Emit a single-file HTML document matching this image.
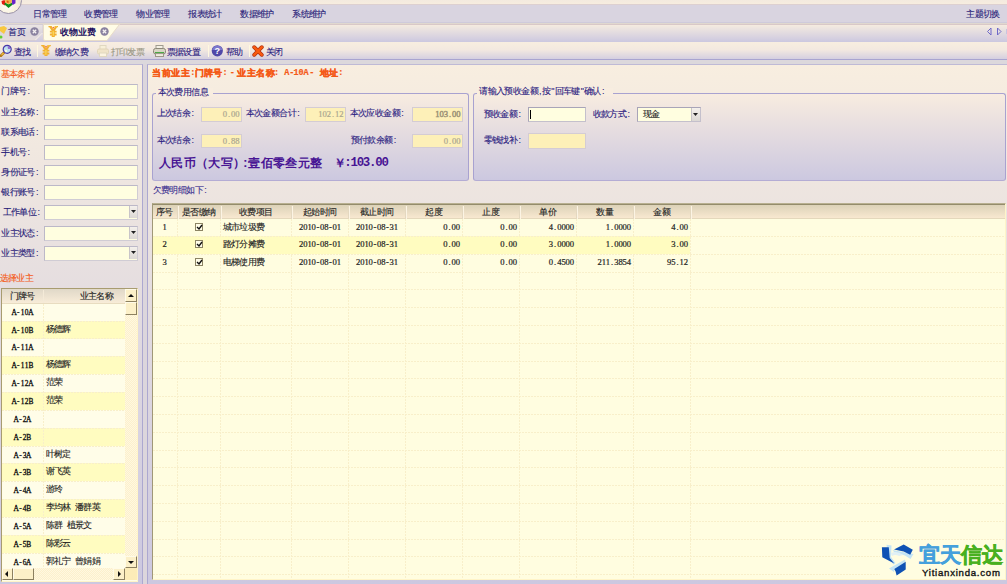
<!DOCTYPE html>
<html><head><meta charset="utf-8">
<style>
*{margin:0;padding:0;box-sizing:border-box}
html,body{width:1007px;height:584px;overflow:hidden;background:#dcd6dc;font-family:"Liberation Sans",sans-serif}
.a{position:absolute}
.t{position:absolute;white-space:nowrap;font-size:9px;line-height:10px;color:#2a2080;-webkit-text-stroke-width:0.12px}
.t i{display:inline-flex;justify-content:center;font-style:normal}
.b{-webkit-text-stroke-width:0}
.n{position:absolute;white-space:nowrap;font-family:"Liberation Serif",serif;font-size:8.6px;line-height:9px;color:#222;-webkit-text-stroke:0.2px currentColor}
.n i{display:inline-flex;justify-content:center;width:4.2px;font-style:normal}
</style></head><body>

<div class="a" style="left:0px;top:0px;width:1007px;height:4px;background:linear-gradient(#f3eadf,#f7eddf)"></div>
<div class="a" style="left:0px;top:4px;width:1007px;height:1px;background:#ddd0d0"></div>
<div class="a" style="left:0px;top:5px;width:1007px;height:17px;background:#d9d4e0"></div>
<div class="a" style="left:0px;top:22px;width:1007px;height:1px;background:#cfcadb"></div>
<div class="a" style="left:0px;top:23px;width:1007px;height:1px;background:#e0d8cf"></div>
<div class="a" style="left:0px;top:24px;width:1007px;height:1px;background:#d9c8c8"></div>
<div class="a" style="left:0px;top:25px;width:1007px;height:17px;background:linear-gradient(#f5ebe0,#ccc8e0)"></div>
<div class="a" style="left:0px;top:42px;width:1007px;height:17px;background:linear-gradient(#f8eee0 0,#f3e9e0 45%,#d4cfe0 100%)"></div>
<div class="a" style="left:0px;top:59px;width:1007px;height:1px;background:#a8a4d0"></div>
<div class="a" style="left:0px;top:60px;width:1007px;height:4px;background:#dcd8dc"></div>
<div class="a" style="left:0px;top:64px;width:143px;height:520px;background:linear-gradient(#f8eee0,#ccc8e0);border-right:1px solid #aca8d0;border-top:1px solid #bfbad6"></div>
<div class="a" style="left:147px;top:64px;width:870px;height:520px;background:linear-gradient(#f8eee0,#ccc8e0);border-left:1px solid #aca8d0;border-top:1px solid #bfbad6"></div>
<div class="a" style="left:152px;top:203px;width:854px;height:377px;background:#fffde0;border-top:1px solid #b8b090;border-left:1px solid #a09878;border-right:1px solid #fff4c8;border-bottom:1px solid #fff4c8"></div>
<div class="a" style="left:153px;top:204px;width:852px;height:1px;background:#948c6c"></div>
<div class="a" style="left:153px;top:205px;width:852px;height:14px;background:linear-gradient(#dcd2b8,#f8e8d0);border-bottom:1px solid #e4d8bc"></div>
<div class="a" style="left:177px;top:206px;width:1px;height:13px;background:#e4d8c0"></div>
<div class="a" style="left:178px;top:206px;width:1px;height:13px;background:#fcf4e4"></div>
<div class="a" style="left:177px;top:219px;width:1px;height:360px;background:repeating-linear-gradient(#f8efca 0 2px,transparent 2px 3px)"></div>
<div class="a" style="left:220px;top:206px;width:1px;height:13px;background:#e4d8c0"></div>
<div class="a" style="left:221px;top:206px;width:1px;height:13px;background:#fcf4e4"></div>
<div class="a" style="left:220px;top:219px;width:1px;height:360px;background:repeating-linear-gradient(#f8efca 0 2px,transparent 2px 3px)"></div>
<div class="a" style="left:291px;top:206px;width:1px;height:13px;background:#e4d8c0"></div>
<div class="a" style="left:292px;top:206px;width:1px;height:13px;background:#fcf4e4"></div>
<div class="a" style="left:291px;top:219px;width:1px;height:360px;background:repeating-linear-gradient(#f8efca 0 2px,transparent 2px 3px)"></div>
<div class="a" style="left:348px;top:206px;width:1px;height:13px;background:#e4d8c0"></div>
<div class="a" style="left:349px;top:206px;width:1px;height:13px;background:#fcf4e4"></div>
<div class="a" style="left:348px;top:219px;width:1px;height:360px;background:repeating-linear-gradient(#f8efca 0 2px,transparent 2px 3px)"></div>
<div class="a" style="left:405px;top:206px;width:1px;height:13px;background:#e4d8c0"></div>
<div class="a" style="left:406px;top:206px;width:1px;height:13px;background:#fcf4e4"></div>
<div class="a" style="left:405px;top:219px;width:1px;height:360px;background:repeating-linear-gradient(#f8efca 0 2px,transparent 2px 3px)"></div>
<div class="a" style="left:462px;top:206px;width:1px;height:13px;background:#e4d8c0"></div>
<div class="a" style="left:463px;top:206px;width:1px;height:13px;background:#fcf4e4"></div>
<div class="a" style="left:462px;top:219px;width:1px;height:360px;background:repeating-linear-gradient(#f8efca 0 2px,transparent 2px 3px)"></div>
<div class="a" style="left:519px;top:206px;width:1px;height:13px;background:#e4d8c0"></div>
<div class="a" style="left:520px;top:206px;width:1px;height:13px;background:#fcf4e4"></div>
<div class="a" style="left:519px;top:219px;width:1px;height:360px;background:repeating-linear-gradient(#f8efca 0 2px,transparent 2px 3px)"></div>
<div class="a" style="left:576px;top:206px;width:1px;height:13px;background:#e4d8c0"></div>
<div class="a" style="left:577px;top:206px;width:1px;height:13px;background:#fcf4e4"></div>
<div class="a" style="left:576px;top:219px;width:1px;height:360px;background:repeating-linear-gradient(#f8efca 0 2px,transparent 2px 3px)"></div>
<div class="a" style="left:633px;top:206px;width:1px;height:13px;background:#e4d8c0"></div>
<div class="a" style="left:634px;top:206px;width:1px;height:13px;background:#fcf4e4"></div>
<div class="a" style="left:633px;top:219px;width:1px;height:360px;background:repeating-linear-gradient(#f8efca 0 2px,transparent 2px 3px)"></div>
<div class="a" style="left:690px;top:206px;width:1px;height:13px;background:#e4d8c0"></div>
<div class="a" style="left:691px;top:206px;width:1px;height:13px;background:#fcf4e4"></div>
<div class="a" style="left:690px;top:219px;width:1px;height:360px;background:repeating-linear-gradient(#f8efca 0 2px,transparent 2px 3px)"></div>
<div class="t" style="left:104.75px;top:207px;width:120px;text-align:center;color:#222"><i style="width:8.4px">序</i><i style="width:8.4px">号</i></div>
<div class="t" style="left:139.0px;top:207px;width:120px;text-align:center;color:#222"><i style="width:8.4px">是</i><i style="width:8.4px">否</i><i style="width:8.4px">缴</i><i style="width:8.4px">纳</i></div>
<div class="t" style="left:196.0px;top:207px;width:120px;text-align:center;color:#222"><i style="width:8.4px">收</i><i style="width:8.4px">费</i><i style="width:8.4px">项</i><i style="width:8.4px">目</i></div>
<div class="t" style="left:260.0px;top:207px;width:120px;text-align:center;color:#222"><i style="width:8.4px">起</i><i style="width:8.4px">始</i><i style="width:8.4px">时</i><i style="width:8.4px">间</i></div>
<div class="t" style="left:317.0px;top:207px;width:120px;text-align:center;color:#222"><i style="width:8.4px">截</i><i style="width:8.4px">止</i><i style="width:8.4px">时</i><i style="width:8.4px">间</i></div>
<div class="t" style="left:374.0px;top:207px;width:120px;text-align:center;color:#222"><i style="width:8.4px">起</i><i style="width:8.4px">度</i></div>
<div class="t" style="left:431.0px;top:207px;width:120px;text-align:center;color:#222"><i style="width:8.4px">止</i><i style="width:8.4px">度</i></div>
<div class="t" style="left:488.0px;top:207px;width:120px;text-align:center;color:#222"><i style="width:8.4px">单</i><i style="width:8.4px">价</i></div>
<div class="t" style="left:545.0px;top:207px;width:120px;text-align:center;color:#222"><i style="width:8.4px">数</i><i style="width:8.4px">量</i></div>
<div class="t" style="left:602.0px;top:207px;width:120px;text-align:center;color:#222"><i style="width:8.4px">金</i><i style="width:8.4px">额</i></div>
<div class="a" style="left:153px;top:236px;width:537px;height:18px;background:#fffcc0"></div>
<div class="a" style="left:153px;top:236px;width:852px;height:1px;background:repeating-linear-gradient(90deg,#f8efca 0 2px,transparent 2px 3px)"></div>
<div class="a" style="left:153px;top:254px;width:852px;height:1px;background:repeating-linear-gradient(90deg,#f8efca 0 2px,transparent 2px 3px)"></div>
<div class="a" style="left:153px;top:272px;width:852px;height:1px;background:repeating-linear-gradient(90deg,#f8efca 0 2px,transparent 2px 3px)"></div>
<div class="a" style="left:153px;top:289px;width:852px;height:1px;background:repeating-linear-gradient(90deg,#f8efca 0 2px,transparent 2px 3px)"></div>
<div class="a" style="left:153px;top:307px;width:852px;height:1px;background:repeating-linear-gradient(90deg,#f8efca 0 2px,transparent 2px 3px)"></div>
<div class="a" style="left:153px;top:325px;width:852px;height:1px;background:repeating-linear-gradient(90deg,#f8efca 0 2px,transparent 2px 3px)"></div>
<div class="a" style="left:153px;top:343px;width:852px;height:1px;background:repeating-linear-gradient(90deg,#f8efca 0 2px,transparent 2px 3px)"></div>
<div class="a" style="left:153px;top:361px;width:852px;height:1px;background:repeating-linear-gradient(90deg,#f8efca 0 2px,transparent 2px 3px)"></div>
<div class="a" style="left:153px;top:378px;width:852px;height:1px;background:repeating-linear-gradient(90deg,#f8efca 0 2px,transparent 2px 3px)"></div>
<div class="a" style="left:153px;top:396px;width:852px;height:1px;background:repeating-linear-gradient(90deg,#f8efca 0 2px,transparent 2px 3px)"></div>
<div class="a" style="left:153px;top:414px;width:852px;height:1px;background:repeating-linear-gradient(90deg,#f8efca 0 2px,transparent 2px 3px)"></div>
<div class="a" style="left:153px;top:432px;width:852px;height:1px;background:repeating-linear-gradient(90deg,#f8efca 0 2px,transparent 2px 3px)"></div>
<div class="a" style="left:153px;top:450px;width:852px;height:1px;background:repeating-linear-gradient(90deg,#f8efca 0 2px,transparent 2px 3px)"></div>
<div class="a" style="left:153px;top:467px;width:852px;height:1px;background:repeating-linear-gradient(90deg,#f8efca 0 2px,transparent 2px 3px)"></div>
<div class="a" style="left:153px;top:485px;width:852px;height:1px;background:repeating-linear-gradient(90deg,#f8efca 0 2px,transparent 2px 3px)"></div>
<div class="a" style="left:153px;top:503px;width:852px;height:1px;background:repeating-linear-gradient(90deg,#f8efca 0 2px,transparent 2px 3px)"></div>
<div class="a" style="left:153px;top:521px;width:852px;height:1px;background:repeating-linear-gradient(90deg,#f8efca 0 2px,transparent 2px 3px)"></div>
<div class="a" style="left:153px;top:539px;width:852px;height:1px;background:repeating-linear-gradient(90deg,#f8efca 0 2px,transparent 2px 3px)"></div>
<div class="a" style="left:153px;top:556px;width:852px;height:1px;background:repeating-linear-gradient(90deg,#f8efca 0 2px,transparent 2px 3px)"></div>
<div class="a" style="left:153px;top:574px;width:852px;height:1px;background:repeating-linear-gradient(90deg,#f8efca 0 2px,transparent 2px 3px)"></div>
<div class="n" style="left:104.75px;top:223px;width:120px;text-align:center;"><i>1</i></div>
<div class="a" style="left:195px;top:223px;width:8px;height:8px;border:1px solid #8c8464;background:#fffde8"></div>
<svg class="a" style="left:196px;top:224px" width="7" height="7" viewBox="0 0 7 7"><path d="M1 3 L3 5 L6 1" stroke="#111" stroke-width="1.4" fill="none"/></svg>
<div class="t" style="left:223px;top:222px;color:#222"><i style="width:8.4px">城</i><i style="width:8.4px">市</i><i style="width:8.4px">垃</i><i style="width:8.4px">圾</i><i style="width:8.4px">费</i></div>
<div class="n" style="left:260.0px;top:223px;width:120px;text-align:center;"><i>2</i><i>0</i><i>1</i><i>0</i><i>-</i><i>0</i><i>8</i><i>-</i><i>0</i><i>1</i></div>
<div class="n" style="left:317.0px;top:223px;width:120px;text-align:center;"><i>2</i><i>0</i><i>1</i><i>0</i><i>-</i><i>0</i><i>8</i><i>-</i><i>3</i><i>1</i></div>
<div class="n" style="left:340.0px;top:223px;width:120px;text-align:right;"><i>0</i><i>.</i><i>0</i><i>0</i></div>
<div class="n" style="left:397.0px;top:223px;width:120px;text-align:right;"><i>0</i><i>.</i><i>0</i><i>0</i></div>
<div class="n" style="left:454.0px;top:223px;width:120px;text-align:right;"><i>4</i><i>.</i><i>0</i><i>0</i><i>0</i><i>0</i></div>
<div class="n" style="left:511.0px;top:223px;width:120px;text-align:right;"><i>1</i><i>.</i><i>0</i><i>0</i><i>0</i><i>0</i></div>
<div class="n" style="left:568.0px;top:223px;width:120px;text-align:right;"><i>4</i><i>.</i><i>0</i><i>0</i></div>
<div class="n" style="left:104.75px;top:240px;width:120px;text-align:center;"><i>2</i></div>
<div class="a" style="left:195px;top:240px;width:8px;height:8px;border:1px solid #8c8464;background:#fffde8"></div>
<svg class="a" style="left:196px;top:241px" width="7" height="7" viewBox="0 0 7 7"><path d="M1 3 L3 5 L6 1" stroke="#111" stroke-width="1.4" fill="none"/></svg>
<div class="t" style="left:223px;top:239px;color:#222"><i style="width:8.4px">路</i><i style="width:8.4px">灯</i><i style="width:8.4px">分</i><i style="width:8.4px">摊</i><i style="width:8.4px">费</i></div>
<div class="n" style="left:260.0px;top:240px;width:120px;text-align:center;"><i>2</i><i>0</i><i>1</i><i>0</i><i>-</i><i>0</i><i>8</i><i>-</i><i>0</i><i>1</i></div>
<div class="n" style="left:317.0px;top:240px;width:120px;text-align:center;"><i>2</i><i>0</i><i>1</i><i>0</i><i>-</i><i>0</i><i>8</i><i>-</i><i>3</i><i>1</i></div>
<div class="n" style="left:340.0px;top:240px;width:120px;text-align:right;"><i>0</i><i>.</i><i>0</i><i>0</i></div>
<div class="n" style="left:397.0px;top:240px;width:120px;text-align:right;"><i>0</i><i>.</i><i>0</i><i>0</i></div>
<div class="n" style="left:454.0px;top:240px;width:120px;text-align:right;"><i>3</i><i>.</i><i>0</i><i>0</i><i>0</i><i>0</i></div>
<div class="n" style="left:511.0px;top:240px;width:120px;text-align:right;"><i>1</i><i>.</i><i>0</i><i>0</i><i>0</i><i>0</i></div>
<div class="n" style="left:568.0px;top:240px;width:120px;text-align:right;"><i>3</i><i>.</i><i>0</i><i>0</i></div>
<div class="n" style="left:104.75px;top:258px;width:120px;text-align:center;"><i>3</i></div>
<div class="a" style="left:195px;top:258px;width:8px;height:8px;border:1px solid #8c8464;background:#fffde8"></div>
<svg class="a" style="left:196px;top:259px" width="7" height="7" viewBox="0 0 7 7"><path d="M1 3 L3 5 L6 1" stroke="#111" stroke-width="1.4" fill="none"/></svg>
<div class="t" style="left:223px;top:257px;color:#222"><i style="width:8.4px">电</i><i style="width:8.4px">梯</i><i style="width:8.4px">使</i><i style="width:8.4px">用</i><i style="width:8.4px">费</i></div>
<div class="n" style="left:260.0px;top:258px;width:120px;text-align:center;"><i>2</i><i>0</i><i>1</i><i>0</i><i>-</i><i>0</i><i>8</i><i>-</i><i>0</i><i>1</i></div>
<div class="n" style="left:317.0px;top:258px;width:120px;text-align:center;"><i>2</i><i>0</i><i>1</i><i>0</i><i>-</i><i>0</i><i>8</i><i>-</i><i>3</i><i>1</i></div>
<div class="n" style="left:340.0px;top:258px;width:120px;text-align:right;"><i>0</i><i>.</i><i>0</i><i>0</i></div>
<div class="n" style="left:397.0px;top:258px;width:120px;text-align:right;"><i>0</i><i>.</i><i>0</i><i>0</i></div>
<div class="n" style="left:454.0px;top:258px;width:120px;text-align:right;"><i>0</i><i>.</i><i>4</i><i>5</i><i>0</i><i>0</i></div>
<div class="n" style="left:511.0px;top:258px;width:120px;text-align:right;"><i>2</i><i>1</i><i>1</i><i>.</i><i>3</i><i>8</i><i>5</i><i>4</i></div>
<div class="n" style="left:568.0px;top:258px;width:120px;text-align:right;"><i>9</i><i>5</i><i>.</i><i>1</i><i>2</i></div>
<div class="a" style="left:-5.5px;top:-13.5px;width:27.5px;height:27.5px;border-radius:50%;background:radial-gradient(circle at 45% 70%,#fffef4 0,#f8f0dc 45%,#e0d8d0 75%,#b8b0bc 100%);border:1px solid #9a92a8"></div>
<svg class="a" style="left:0;top:0" width="17" height="9" viewBox="0 0 17 9"><path d="M1.5 1 L4.5 0 L6 3.5 L5 5.5 L2 4Z" fill="#e41c10"/><path d="M4 4 L8.5 8 L12.8 4.5 L11.5 2.8 L8.5 4.2 L5.5 2.8Z" fill="#10901c"/><path d="M12 0 L15.5 0 L15.5 3.2 L12.8 5 L11.6 2.8Z" fill="#6a24c8"/><path d="M5 0 L12 0 L11.6 2.8 L8.5 4.2 L5.5 2.8Z" fill="#f2b448"/><path d="M6.5 1 L8 0.5 L9 2.2 L7.5 3Z" fill="#e85a10"/></svg>
<div class="t" style="left:33.5px;top:8.5px;color:#281c78"><i style="width:8.4px">日</i><i style="width:8.4px">常</i><i style="width:8.4px">管</i><i style="width:8.4px">理</i></div>
<div class="t" style="left:84.5px;top:8.5px;color:#281c78"><i style="width:8.4px">收</i><i style="width:8.4px">费</i><i style="width:8.4px">管</i><i style="width:8.4px">理</i></div>
<div class="t" style="left:136.5px;top:8.5px;color:#281c78"><i style="width:8.4px">物</i><i style="width:8.4px">业</i><i style="width:8.4px">管</i><i style="width:8.4px">理</i></div>
<div class="t" style="left:188.5px;top:8.5px;color:#281c78"><i style="width:8.4px">报</i><i style="width:8.4px">表</i><i style="width:8.4px">统</i><i style="width:8.4px">计</i></div>
<div class="t" style="left:240.5px;top:8.5px;color:#281c78"><i style="width:8.4px">数</i><i style="width:8.4px">据</i><i style="width:8.4px">维</i><i style="width:8.4px">护</i></div>
<div class="t" style="left:292.5px;top:8.5px;color:#281c78"><i style="width:8.4px">系</i><i style="width:8.4px">统</i><i style="width:8.4px">维</i><i style="width:8.4px">护</i></div>
<div class="t" style="left:966.5px;top:8.5px;color:#281c78"><i style="width:8.4px">主</i><i style="width:8.4px">题</i><i style="width:8.4px">切</i><i style="width:8.4px">换</i></div>
<svg class="a" style="left:0;top:24px" width="125" height="18" viewBox="0 0 125 18"><defs><linearGradient id="tg1" x1="0" y1="0" x2="0" y2="1"><stop offset="0" stop-color="#ece6e4"/><stop offset="0.5" stop-color="#dcd6de"/><stop offset="1" stop-color="#e4dcdc"/></linearGradient></defs><path d="M-1 0.5 L43 0.5 L43 9 L35.5 16.5 L-1 16.5Z" fill="url(#tg1)" stroke="#d4ccd4" stroke-width="1"/><path d="M35.5 16 L42.5 9" stroke="#fbf4ec" stroke-width="1" fill="none"/><path d="M43.5 0.5 L119.5 0.5 L107 16.5 L45 16.5 Q43.5 16.5 43.5 15Z" fill="#fffce6" stroke="#e8dcc8" stroke-width="1"/></svg>
<svg class="a" style="left:0;top:25px" width="8" height="14" viewBox="0 0 8 14"><path d="M0 2 L4 1 L7 3 L4 9 L0 6Z" fill="#f8c840"/><circle cx="1" cy="12" r="1.5" fill="#60d030"/></svg>
<div class="t" style="left:8.5px;top:27px;color:#281c78"><i style="width:8.4px">首</i><i style="width:8.4px">页</i></div>
<svg class="a" style="left:30.4px;top:27px" width="9" height="9" viewBox="0 0 9 9"><circle cx="4.5" cy="4.5" r="4.2" fill="#8a82a0"/><path d="M2.8 2.8 L6.2 6.2 M6.2 2.8 L2.8 6.2" stroke="#f4f0f0" stroke-width="1.3"/></svg>
<svg class="a" style="left:100.2px;top:27px" width="9" height="9" viewBox="0 0 9 9"><circle cx="4.5" cy="4.5" r="4.2" fill="#8a82a0"/><path d="M2.8 2.8 L6.2 6.2 M6.2 2.8 L2.8 6.2" stroke="#f4f0f0" stroke-width="1.3"/></svg>
<svg class="a" style="left:47.5px;top:26px" width="10.5" height="11.5" viewBox="0 0 10 12"><path d="M0 0 L3.6 0 L3.6 1.2 L5 3.2 L6.4 1.2 L6.4 0 L10 0 L10 1.4 L9 1.4 L6.6 5 L8.5 5 L8.5 6.8 L6.6 6.8 L6.6 7.8 L8.5 7.8 L8.5 9.8 L6.6 9.8 L6.6 11.6 L3.4 11.6 L3.4 9.8 L1.5 9.8 L1.5 7.8 L3.4 7.8 L3.4 6.8 L1.5 6.8 L1.5 5 L3.4 5 L1 1.4 L0 1.4Z" fill="#f2b030"/><path d="M4.3 5.5 L5.6 5.5 L5.3 10.5 L4.6 10.5Z" fill="#fce868"/><path d="M7 0.5 L9 0.5 L8 1.5Z" fill="#fce060"/><circle cx="5" cy="1.6" r="0.9" fill="#f07040"/></svg>
<div class="t b" style="left:60px;top:27px;color:#1c1060;font-weight:bold"><i style="width:9.1px">收</i><i style="width:9.1px">物</i><i style="width:9.1px">业</i><i style="width:9.1px">费</i></div>
<svg class="a" style="left:986px;top:27px" width="21" height="9" viewBox="0 0 21 9"><path d="M5 1 L1.5 4.5 L5 8Z" fill="none" stroke="#6e68c8" stroke-width="1"/><path d="M11.5 1 L15 4.5 L11.5 8Z" fill="none" stroke="#6e68c8" stroke-width="1"/><path d="M20.5 2 L20.5 7" stroke="#c8c4e0" stroke-width="1"/></svg>
<svg class="a" style="left:0;top:44px" width="13" height="13" viewBox="0 0 13 13"><path d="M0.8 11.8 L4 8.6" stroke="#b07818" stroke-width="2.6" stroke-linecap="round"/><path d="M1.5 11 L3.6 9" stroke="#f0c040" stroke-width="1.2"/><circle cx="7.2" cy="5.3" r="4" fill="#c0e0f0" stroke="#4838a8" stroke-width="1.2"/><path d="M7.5 2 A3 3 0 0 1 10.4 5 L8 5Z" fill="#9070d0"/><circle cx="6" cy="7" r="1.2" fill="#f4fce8"/></svg>
<div class="t" style="left:14px;top:46.5px;"><i style="width:8.4px">查</i><i style="width:8.4px">找</i></div>
<div class="a" style="left:37px;top:45px;width:1px;height:12px;background:#fff8e0"></div>
<svg class="a" style="left:41px;top:45px" width="10" height="11.5" viewBox="0 0 10 12"><path d="M0 0 L3.6 0 L3.6 1.2 L5 3.2 L6.4 1.2 L6.4 0 L10 0 L10 1.4 L9 1.4 L6.6 5 L8.5 5 L8.5 6.8 L6.6 6.8 L6.6 7.8 L8.5 7.8 L8.5 9.8 L6.6 9.8 L6.6 11.6 L3.4 11.6 L3.4 9.8 L1.5 9.8 L1.5 7.8 L3.4 7.8 L3.4 6.8 L1.5 6.8 L1.5 5 L3.4 5 L1 1.4 L0 1.4Z" fill="#f2b030"/><path d="M4.3 5.5 L5.6 5.5 L5.3 10.5 L4.6 10.5Z" fill="#fce868"/><path d="M7 0.5 L9 0.5 L8 1.5Z" fill="#fce060"/><circle cx="5" cy="1.6" r="0.9" fill="#f07040"/></svg>
<div class="t" style="left:55px;top:46.5px;"><i style="width:8.4px">缴</i><i style="width:8.4px">纳</i><i style="width:8.4px">欠</i><i style="width:8.4px">费</i></div>
<svg class="a" style="left:97px;top:45px" width="12" height="12" viewBox="0 0 12 12"><rect x="3" y="0.5" width="6" height="4" fill="#f8f0d8" stroke="#e0d8c0"/><rect x="0.5" y="4" width="11" height="5" rx="1.5" fill="#f0e4c8" stroke="#e0d4b8"/><rect x="2.5" y="8" width="7" height="3.5" fill="#fcf4e0" stroke="#e0d8c0"/></svg>
<div class="t" style="left:111px;top:46.5px;color:#9a9884"><i style="width:8.4px">打</i><i style="width:8.4px">印</i><i style="width:8.4px">发</i><i style="width:8.4px">票</i></div>
<svg class="a" style="left:153px;top:45px" width="13" height="12" viewBox="0 0 13 12"><rect x="3" y="0.5" width="7" height="3.5" fill="#f4f0e4" stroke="#a09c90"/><rect x="0.5" y="3.5" width="12" height="5.5" rx="2" fill="#d8d4c4" stroke="#8c8878"/><rect x="2" y="7.2" width="9" height="1.4" fill="#28a028"/><rect x="2.5" y="8.6" width="8" height="2.9" fill="#f0ece0" stroke="#9c9888"/></svg>
<div class="t" style="left:167px;top:46.5px;"><i style="width:8.4px">票</i><i style="width:8.4px">据</i><i style="width:8.4px">设</i><i style="width:8.4px">置</i></div>
<div class="a" style="left:208px;top:45px;width:1px;height:12px;background:#fff8e0"></div>
<svg class="a" style="left:211px;top:45px" width="13" height="12" viewBox="0 0 13 12"><circle cx="6.3" cy="5.8" r="5.6" fill="#5048a8"/><path d="M1.2 5 A5.2 5.2 0 0 1 11.4 5Z" fill="#7c78cc"/><text x="6.3" y="9.3" font-size="9" font-weight="bold" text-anchor="middle" fill="#fff" font-family="Liberation Sans">?</text></svg>
<div class="t" style="left:226px;top:46.5px;"><i style="width:8.4px">帮</i><i style="width:8.4px">助</i></div>
<div class="a" style="left:249px;top:45px;width:1px;height:12px;background:#fff8e0"></div>
<svg class="a" style="left:252px;top:45px" width="12" height="12" viewBox="0 0 12 12"><path d="M2.2 2.2 L9.8 9.8 M9.8 2.2 L2.2 9.8" stroke="#b03010" stroke-width="3.8" stroke-linecap="round"/><path d="M2.2 2.2 L9.8 9.8 M9.8 2.2 L2.2 9.8" stroke="#f85a10" stroke-width="2.4" stroke-linecap="round"/></svg>
<div class="t" style="left:266px;top:46.5px;"><i style="width:8.4px">关</i><i style="width:8.4px">闭</i></div>
<div class="t" style="left:1px;top:68.5px;color:#f45a18"><i style="width:8.4px">基</i><i style="width:8.4px">本</i><i style="width:8.4px">条</i><i style="width:8.4px">件</i></div>
<div class="t" style="left:1.5px;top:85.5px;color:#281c78"><i style="width:8.4px">门</i><i style="width:8.4px">牌</i><i style="width:8.4px">号</i><i style="width:4.2px">:</i></div>
<div class="a" style="left:44px;top:84px;width:94px;height:15px;background:#fffee0;border:1px solid #d0ccd4;border-top-color:#bcb8c8;border-left-color:#bcb8c8"></div>
<div class="t" style="left:1.5px;top:106.5px;color:#281c78"><i style="width:8.4px">业</i><i style="width:8.4px">主</i><i style="width:8.4px">名</i><i style="width:8.4px">称</i><i style="width:4.2px">:</i></div>
<div class="a" style="left:44px;top:105px;width:94px;height:15px;background:#fffee0;border:1px solid #d0ccd4;border-top-color:#bcb8c8;border-left-color:#bcb8c8"></div>
<div class="t" style="left:1.5px;top:126.5px;color:#281c78"><i style="width:8.4px">联</i><i style="width:8.4px">系</i><i style="width:8.4px">电</i><i style="width:8.4px">话</i><i style="width:4.2px">:</i></div>
<div class="a" style="left:44px;top:125px;width:94px;height:15px;background:#fffee0;border:1px solid #d0ccd4;border-top-color:#bcb8c8;border-left-color:#bcb8c8"></div>
<div class="t" style="left:1.5px;top:146.5px;color:#281c78"><i style="width:8.4px">手</i><i style="width:8.4px">机</i><i style="width:8.4px">号</i><i style="width:4.2px">:</i></div>
<div class="a" style="left:44px;top:145px;width:94px;height:15px;background:#fffee0;border:1px solid #d0ccd4;border-top-color:#bcb8c8;border-left-color:#bcb8c8"></div>
<div class="t" style="left:1.5px;top:166.5px;color:#281c78"><i style="width:8.4px">身</i><i style="width:8.4px">份</i><i style="width:8.4px">证</i><i style="width:8.4px">号</i><i style="width:4.2px">:</i></div>
<div class="a" style="left:44px;top:165px;width:94px;height:15px;background:#fffee0;border:1px solid #d0ccd4;border-top-color:#bcb8c8;border-left-color:#bcb8c8"></div>
<div class="t" style="left:1.5px;top:186.5px;color:#281c78"><i style="width:8.4px">银</i><i style="width:8.4px">行</i><i style="width:8.4px">账</i><i style="width:8.4px">号</i><i style="width:4.2px">:</i></div>
<div class="a" style="left:44px;top:185px;width:94px;height:15px;background:#fffee0;border:1px solid #d0ccd4;border-top-color:#bcb8c8;border-left-color:#bcb8c8"></div>
<div class="t" style="left:3px;top:206.5px;color:#281c78"><i style="width:8.4px">工</i><i style="width:8.4px">作</i><i style="width:8.4px">单</i><i style="width:8.4px">位</i><i style="width:4.2px">:</i></div>
<div class="a" style="left:44px;top:205px;width:94px;height:15px;background:#fffee0;border:1px solid #d0ccd4;border-top-color:#bcb8c8;border-left-color:#bcb8c8"></div>
<div class="a" style="left:129px;top:206px;width:8px;height:12px;background:linear-gradient(#f4f0ec,#dcd8d4);border-left:1px solid #c8c4c8"></div>
<svg class="a" style="left:131px;top:210px" width="5" height="3" viewBox="0 0 5 3"><path d="M0 0 L5 0 L2.5 3Z" fill="#222"/></svg>
<div class="t" style="left:1.5px;top:227.5px;color:#281c78"><i style="width:8.4px">业</i><i style="width:8.4px">主</i><i style="width:8.4px">状</i><i style="width:8.4px">态</i><i style="width:4.2px">:</i></div>
<div class="a" style="left:44px;top:226px;width:94px;height:15px;background:#fffee0;border:1px solid #d0ccd4;border-top-color:#bcb8c8;border-left-color:#bcb8c8"></div>
<div class="a" style="left:129px;top:227px;width:8px;height:12px;background:linear-gradient(#f4f0ec,#dcd8d4);border-left:1px solid #c8c4c8"></div>
<svg class="a" style="left:131px;top:231px" width="5" height="3" viewBox="0 0 5 3"><path d="M0 0 L5 0 L2.5 3Z" fill="#222"/></svg>
<div class="t" style="left:1.5px;top:247.5px;color:#281c78"><i style="width:8.4px">业</i><i style="width:8.4px">主</i><i style="width:8.4px">类</i><i style="width:8.4px">型</i><i style="width:4.2px">:</i></div>
<div class="a" style="left:44px;top:246px;width:94px;height:15px;background:#fffee0;border:1px solid #d0ccd4;border-top-color:#bcb8c8;border-left-color:#bcb8c8"></div>
<div class="a" style="left:129px;top:247px;width:8px;height:12px;background:linear-gradient(#f4f0ec,#dcd8d4);border-left:1px solid #c8c4c8"></div>
<svg class="a" style="left:131px;top:251px" width="5" height="3" viewBox="0 0 5 3"><path d="M0 0 L5 0 L2.5 3Z" fill="#222"/></svg>
<div class="t" style="left:0px;top:273px;color:#f45a18"><i style="width:8.4px">选</i><i style="width:8.4px">择</i><i style="width:8.4px">业</i><i style="width:8.4px">主</i></div>
<div class="a" style="left:1px;top:288px;width:137px;height:294px;background:#fffde8;border-top:1px solid #a89c70;border-left:1px solid #a89c70;border-right:1px solid #fff4c8;border-bottom:1px solid #fff4c8"></div>
<div class="a" style="left:2px;top:289px;width:124px;height:15px;background:linear-gradient(#e0d8c8,#f8ecd8);border-bottom:1px solid #e8dcc0"></div>
<div class="a" style="left:43px;top:290px;width:1px;height:13px;background:#f4ead8"></div>
<div class="t" style="left:10px;top:291px;color:#222"><i style="width:8.4px">门</i><i style="width:8.4px">牌</i><i style="width:8.4px">号</i></div>
<div class="t" style="left:80px;top:291px;color:#222"><i style="width:8.4px">业</i><i style="width:8.4px">主</i><i style="width:8.4px">名</i><i style="width:8.4px">称</i></div>
<div class="n" style="left:-37.5px;top:307.5px;width:120px;text-align:center;font-size:7.4px;color:#111;-webkit-text-stroke:0.3px #111"><i>A</i><i>-</i><i>1</i><i>0</i><i>A</i></div>
<div class="a" style="left:2px;top:321px;width:123px;height:18px;background:#fffcc0"></div>
<div class="a" style="left:2px;top:321px;width:123px;height:1px;background:repeating-linear-gradient(90deg,#f8efca 0 2px,transparent 2px 3px)"></div>
<div class="n" style="left:-37.5px;top:325.5px;width:120px;text-align:center;font-size:7.4px;color:#111;-webkit-text-stroke:0.3px #111"><i>A</i><i>-</i><i>1</i><i>0</i><i>B</i></div>
<div class="t" style="left:46px;top:323.5px;color:#222"><i style="width:8.4px">杨</i><i style="width:8.4px">德</i><i style="width:8.4px">辉</i></div>
<div class="a" style="left:2px;top:338px;width:123px;height:1px;background:repeating-linear-gradient(90deg,#f8efca 0 2px,transparent 2px 3px)"></div>
<div class="n" style="left:-37.5px;top:342.5px;width:120px;text-align:center;font-size:7.4px;color:#111;-webkit-text-stroke:0.3px #111"><i>A</i><i>-</i><i>1</i><i>1</i><i>A</i></div>
<div class="a" style="left:2px;top:356px;width:123px;height:18px;background:#fffcc0"></div>
<div class="a" style="left:2px;top:356px;width:123px;height:1px;background:repeating-linear-gradient(90deg,#f8efca 0 2px,transparent 2px 3px)"></div>
<div class="n" style="left:-37.5px;top:360.5px;width:120px;text-align:center;font-size:7.4px;color:#111;-webkit-text-stroke:0.3px #111"><i>A</i><i>-</i><i>1</i><i>1</i><i>B</i></div>
<div class="t" style="left:46px;top:358.5px;color:#222"><i style="width:8.4px">杨</i><i style="width:8.4px">德</i><i style="width:8.4px">辉</i></div>
<div class="a" style="left:2px;top:374px;width:123px;height:1px;background:repeating-linear-gradient(90deg,#f8efca 0 2px,transparent 2px 3px)"></div>
<div class="n" style="left:-37.5px;top:378.5px;width:120px;text-align:center;font-size:7.4px;color:#111;-webkit-text-stroke:0.3px #111"><i>A</i><i>-</i><i>1</i><i>2</i><i>A</i></div>
<div class="t" style="left:46px;top:376.5px;color:#222"><i style="width:8.4px">范</i><i style="width:8.4px">荣</i></div>
<div class="a" style="left:2px;top:392px;width:123px;height:18px;background:#fffcc0"></div>
<div class="a" style="left:2px;top:392px;width:123px;height:1px;background:repeating-linear-gradient(90deg,#f8efca 0 2px,transparent 2px 3px)"></div>
<div class="n" style="left:-37.5px;top:396.5px;width:120px;text-align:center;font-size:7.4px;color:#111;-webkit-text-stroke:0.3px #111"><i>A</i><i>-</i><i>1</i><i>2</i><i>B</i></div>
<div class="t" style="left:46px;top:394.5px;color:#222"><i style="width:8.4px">范</i><i style="width:8.4px">荣</i></div>
<div class="a" style="left:2px;top:410px;width:123px;height:1px;background:repeating-linear-gradient(90deg,#f8efca 0 2px,transparent 2px 3px)"></div>
<div class="n" style="left:-37.5px;top:414.5px;width:120px;text-align:center;font-size:7.4px;color:#111;-webkit-text-stroke:0.3px #111"><i>A</i><i>-</i><i>2</i><i>A</i></div>
<div class="a" style="left:2px;top:428px;width:123px;height:18px;background:#fffcc0"></div>
<div class="a" style="left:2px;top:428px;width:123px;height:1px;background:repeating-linear-gradient(90deg,#f8efca 0 2px,transparent 2px 3px)"></div>
<div class="n" style="left:-37.5px;top:432.5px;width:120px;text-align:center;font-size:7.4px;color:#111;-webkit-text-stroke:0.3px #111"><i>A</i><i>-</i><i>2</i><i>B</i></div>
<div class="a" style="left:2px;top:446px;width:123px;height:1px;background:repeating-linear-gradient(90deg,#f8efca 0 2px,transparent 2px 3px)"></div>
<div class="n" style="left:-37.5px;top:450.5px;width:120px;text-align:center;font-size:7.4px;color:#111;-webkit-text-stroke:0.3px #111"><i>A</i><i>-</i><i>3</i><i>A</i></div>
<div class="t" style="left:46px;top:448.5px;color:#222"><i style="width:8.4px">叶</i><i style="width:8.4px">树</i><i style="width:8.4px">定</i></div>
<div class="a" style="left:2px;top:463px;width:123px;height:18px;background:#fffcc0"></div>
<div class="a" style="left:2px;top:463px;width:123px;height:1px;background:repeating-linear-gradient(90deg,#f8efca 0 2px,transparent 2px 3px)"></div>
<div class="n" style="left:-37.5px;top:467.5px;width:120px;text-align:center;font-size:7.4px;color:#111;-webkit-text-stroke:0.3px #111"><i>A</i><i>-</i><i>3</i><i>B</i></div>
<div class="t" style="left:46px;top:465.5px;color:#222"><i style="width:8.4px">谢</i><i style="width:8.4px">飞</i><i style="width:8.4px">英</i></div>
<div class="a" style="left:2px;top:481px;width:123px;height:1px;background:repeating-linear-gradient(90deg,#f8efca 0 2px,transparent 2px 3px)"></div>
<div class="n" style="left:-37.5px;top:485.5px;width:120px;text-align:center;font-size:7.4px;color:#111;-webkit-text-stroke:0.3px #111"><i>A</i><i>-</i><i>4</i><i>A</i></div>
<div class="t" style="left:46px;top:483.5px;color:#222"><i style="width:8.4px">游</i><i style="width:8.4px">玲</i></div>
<div class="a" style="left:2px;top:499px;width:123px;height:18px;background:#fffcc0"></div>
<div class="a" style="left:2px;top:499px;width:123px;height:1px;background:repeating-linear-gradient(90deg,#f8efca 0 2px,transparent 2px 3px)"></div>
<div class="n" style="left:-37.5px;top:503.5px;width:120px;text-align:center;font-size:7.4px;color:#111;-webkit-text-stroke:0.3px #111"><i>A</i><i>-</i><i>4</i><i>B</i></div>
<div class="t" style="left:46px;top:501.5px;color:#222"><i style="width:8.4px">李</i><i style="width:8.4px">均</i><i style="width:8.4px">林</i><i style="width:4.2px">&nbsp;</i><i style="width:8.4px">潘</i><i style="width:8.4px">群</i><i style="width:8.4px">英</i></div>
<div class="a" style="left:2px;top:517px;width:123px;height:1px;background:repeating-linear-gradient(90deg,#f8efca 0 2px,transparent 2px 3px)"></div>
<div class="n" style="left:-37.5px;top:521.5px;width:120px;text-align:center;font-size:7.4px;color:#111;-webkit-text-stroke:0.3px #111"><i>A</i><i>-</i><i>5</i><i>A</i></div>
<div class="t" style="left:46px;top:519.5px;color:#222"><i style="width:8.4px">陈</i><i style="width:8.4px">群</i><i style="width:4.2px">&nbsp;</i><i style="width:8.4px">植</i><i style="width:8.4px">景</i><i style="width:8.4px">文</i></div>
<div class="a" style="left:2px;top:535px;width:123px;height:18px;background:#fffcc0"></div>
<div class="a" style="left:2px;top:535px;width:123px;height:1px;background:repeating-linear-gradient(90deg,#f8efca 0 2px,transparent 2px 3px)"></div>
<div class="n" style="left:-37.5px;top:539.5px;width:120px;text-align:center;font-size:7.4px;color:#111;-webkit-text-stroke:0.3px #111"><i>A</i><i>-</i><i>5</i><i>B</i></div>
<div class="t" style="left:46px;top:537.5px;color:#222"><i style="width:8.4px">陈</i><i style="width:8.4px">彩</i><i style="width:8.4px">云</i></div>
<div class="a" style="left:2px;top:553px;width:123px;height:1px;background:repeating-linear-gradient(90deg,#f8efca 0 2px,transparent 2px 3px)"></div>
<div class="n" style="left:-37.5px;top:557.5px;width:120px;text-align:center;font-size:7.4px;color:#111;-webkit-text-stroke:0.3px #111"><i>A</i><i>-</i><i>6</i><i>A</i></div>
<div class="t" style="left:46px;top:555.5px;color:#222"><i style="width:8.4px">郭</i><i style="width:8.4px">礼</i><i style="width:8.4px">宁</i><i style="width:4.2px">&nbsp;</i><i style="width:8.4px">曾</i><i style="width:8.4px">娟</i><i style="width:8.4px">娟</i></div>
<div class="a" style="left:43px;top:304px;width:1px;height:276px;background:repeating-linear-gradient(#f8efca 0 2px,transparent 2px 3px)"></div>
<div class="a" style="left:125px;top:289px;width:12px;height:279px;background:repeating-conic-gradient(#fcf0cc 0 25%,#fff8e0 0 50%) 0 0/2px 2px"></div>
<div class="a" style="left:125px;top:289px;width:12px;height:13px;background:#fcf0c8;border-top:1px solid #fffbe8;border-left:1px solid #fffbe8;border-right:1px solid #8c8060;border-bottom:1px solid #8c8060"></div>
<svg class="a" style="left:128px;top:294px" width="6" height="3" viewBox="0 0 6 3"><path d="M0 3 L6 3 L3 0Z" fill="#111"/></svg>
<div class="a" style="left:125px;top:302px;width:12px;height:13px;background:#fcf0c8;border-top:1px solid #fffbe8;border-left:1px solid #fffbe8;border-right:1px solid #8c8060;border-bottom:1px solid #8c8060"></div>
<div class="a" style="left:125px;top:556px;width:12px;height:12px;background:#fcf0c8;border-top:1px solid #fffbe8;border-left:1px solid #fffbe8;border-right:1px solid #8c8060;border-bottom:1px solid #8c8060"></div>
<svg class="a" style="left:128px;top:561px" width="6" height="3" viewBox="0 0 6 3"><path d="M0 0 L6 0 L3 3Z" fill="#111"/></svg>
<div class="a" style="left:2px;top:568px;width:123px;height:12px;background:repeating-conic-gradient(#fcf0cc 0 25%,#fff8e0 0 50%) 0 0/2px 2px"></div>
<div class="a" style="left:2px;top:568px;width:11px;height:12px;background:#fcf0c8;border-top:1px solid #fffbe8;border-left:1px solid #fffbe8;border-right:1px solid #8c8060;border-bottom:1px solid #8c8060"></div>
<svg class="a" style="left:5px;top:571px" width="3" height="6" viewBox="0 0 3 6"><path d="M3 0 L3 6 L0 3Z" fill="#111"/></svg>
<div class="a" style="left:13px;top:568px;width:21px;height:12px;background:#fcf0c8;border-top:1px solid #fffbe8;border-left:1px solid #fffbe8;border-right:1px solid #8c8060;border-bottom:1px solid #8c8060"></div>
<div class="a" style="left:113px;top:568px;width:12px;height:12px;background:#fcf0c8;border-top:1px solid #fffbe8;border-left:1px solid #fffbe8;border-right:1px solid #8c8060;border-bottom:1px solid #8c8060"></div>
<svg class="a" style="left:118px;top:571px" width="3" height="6" viewBox="0 0 3 6"><path d="M0 0 L0 6 L3 3Z" fill="#111"/></svg>
<div class="a" style="left:125px;top:568px;width:12px;height:12px;background:#fcecb8"></div>
<div class="t" style="left:148.45px;top:68px;width:16px;text-align:center;color:#f45a18;font-weight:bold;font-size:9.4px;-webkit-text-stroke-width:0.3px">当</div>
<div class="t" style="left:158.15px;top:68px;width:16px;text-align:center;color:#f45a18;font-weight:bold;font-size:9.4px;-webkit-text-stroke-width:0.3px">前</div>
<div class="t" style="left:167.6px;top:68px;width:16px;text-align:center;color:#f45a18;font-weight:bold;font-size:9.4px;-webkit-text-stroke-width:0.3px">业</div>
<div class="t" style="left:177px;top:68px;width:16px;text-align:center;color:#f45a18;font-weight:bold;font-size:9.4px;-webkit-text-stroke-width:0.3px">主</div>
<div class="t" style="left:184.7px;top:68px;width:16px;text-align:center;color:#f45a18;font-weight:bold;font-size:8.5px;font-family:'Liberation Mono';-webkit-text-stroke-width:0.2px">:</div>
<div class="t" style="left:191.9px;top:68px;width:16px;text-align:center;color:#f45a18;font-weight:bold;font-size:9.4px;-webkit-text-stroke-width:0.3px">门</div>
<div class="t" style="left:200.85px;top:68px;width:16px;text-align:center;color:#f45a18;font-weight:bold;font-size:9.4px;-webkit-text-stroke-width:0.3px">牌</div>
<div class="t" style="left:209.8px;top:68px;width:16px;text-align:center;color:#f45a18;font-weight:bold;font-size:9.4px;-webkit-text-stroke-width:0.3px">号</div>
<div class="t" style="left:217px;top:68px;width:16px;text-align:center;color:#f45a18;font-weight:bold;font-size:8.5px;font-family:'Liberation Mono';-webkit-text-stroke-width:0.2px">:</div>
<div class="t" style="left:224.4px;top:68px;width:16px;text-align:center;color:#f45a18;font-weight:bold;font-size:8.5px;font-family:'Liberation Mono';-webkit-text-stroke-width:0.2px">-</div>
<div class="t" style="left:233.1px;top:68px;width:16px;text-align:center;color:#f45a18;font-weight:bold;font-size:9.4px;-webkit-text-stroke-width:0.3px">业</div>
<div class="t" style="left:243.2px;top:68px;width:16px;text-align:center;color:#f45a18;font-weight:bold;font-size:9.4px;-webkit-text-stroke-width:0.3px">主</div>
<div class="t" style="left:252.64999999999998px;top:68px;width:16px;text-align:center;color:#f45a18;font-weight:bold;font-size:9.4px;-webkit-text-stroke-width:0.3px">名</div>
<div class="t" style="left:262.35px;top:68px;width:16px;text-align:center;color:#f45a18;font-weight:bold;font-size:9.4px;-webkit-text-stroke-width:0.3px">称</div>
<div class="t" style="left:268.55px;top:68px;width:16px;text-align:center;color:#f45a18;font-weight:bold;font-size:8.5px;font-family:'Liberation Mono';-webkit-text-stroke-width:0.2px">:</div>
<div class="t" style="left:278.7px;top:68px;width:16px;text-align:center;color:#f45a18;font-weight:bold;font-size:8.5px;font-family:'Liberation Mono';-webkit-text-stroke-width:0.2px">A</div>
<div class="t" style="left:283.7px;top:68px;width:16px;text-align:center;color:#f45a18;font-weight:bold;font-size:8.5px;font-family:'Liberation Mono';-webkit-text-stroke-width:0.2px">-</div>
<div class="t" style="left:288.15px;top:68px;width:16px;text-align:center;color:#f45a18;font-weight:bold;font-size:8.5px;font-family:'Liberation Mono';-webkit-text-stroke-width:0.2px">1</div>
<div class="t" style="left:293.1px;top:68px;width:16px;text-align:center;color:#f45a18;font-weight:bold;font-size:8.5px;font-family:'Liberation Mono';-webkit-text-stroke-width:0.2px">0</div>
<div class="t" style="left:298.1px;top:68px;width:16px;text-align:center;color:#f45a18;font-weight:bold;font-size:8.5px;font-family:'Liberation Mono';-webkit-text-stroke-width:0.2px">A</div>
<div class="t" style="left:303.75px;top:68px;width:16px;text-align:center;color:#f45a18;font-weight:bold;font-size:8.5px;font-family:'Liberation Mono';-webkit-text-stroke-width:0.2px">-</div>
<div class="t" style="left:316.2px;top:68px;width:16px;text-align:center;color:#f45a18;font-weight:bold;font-size:9.4px;-webkit-text-stroke-width:0.3px">地</div>
<div class="t" style="left:325.85px;top:68px;width:16px;text-align:center;color:#f45a18;font-weight:bold;font-size:9.4px;-webkit-text-stroke-width:0.3px">址</div>
<div class="t" style="left:332.8px;top:68px;width:16px;text-align:center;color:#f45a18;font-weight:bold;font-size:8.5px;font-family:'Liberation Mono';-webkit-text-stroke-width:0.2px">:</div>
<div class="a" style="left:152px;top:93px;width:317px;height:88px;border:1px solid #a8a2d0;border-bottom-color:#b4acd4;border-radius:3px;background:linear-gradient(#f8ece0,#ccc8e0)"></div>
<div class="a" style="left:473px;top:93px;width:533px;height:88px;border:1px solid #a8a2d0;border-bottom-color:#b4acd4;border-radius:3px;background:linear-gradient(#f8ece0,#ccc8e0)"></div>
<div class="a" style="left:156px;top:88px;width:57px;height:8px;background:#f8ede0"></div>
<div class="t" style="left:158px;top:86.5px;"><i style="width:8.4px">本</i><i style="width:8.4px">次</i><i style="width:8.4px">费</i><i style="width:8.4px">用</i><i style="width:8.4px">信</i><i style="width:8.4px">息</i></div>
<div class="a" style="left:477px;top:88px;width:136px;height:8px;background:#f8ede0"></div>
<div class="t" style="left:479.5px;top:86px;"><i style="width:8.4px">请</i><i style="width:8.4px">输</i><i style="width:8.4px">入</i><i style="width:8.4px">预</i><i style="width:8.4px">收</i><i style="width:8.4px">金</i><i style="width:8.4px">额</i><i style="width:4.2px">,</i><i style="width:8.4px">按</i><i style="width:4.2px">&quot;</i><i style="width:8.4px">回</i><i style="width:8.4px">车</i><i style="width:8.4px">键</i><i style="width:4.2px">&quot;</i><i style="width:8.4px">确</i><i style="width:8.4px">认</i><i style="width:4.2px">:</i></div>
<div class="t" style="left:157px;top:108px;"><i style="width:8.4px">上</i><i style="width:8.4px">次</i><i style="width:8.4px">结</i><i style="width:8.4px">余</i><i style="width:4.2px">:</i></div>
<div class="a" style="left:201px;top:107px;width:41px;height:15px;background:#fdf0b8;border:1px solid #d4ccd4"></div>
<div class="n" style="left:119.5px;top:110px;width:120px;text-align:right;color:#aaa690;"><i>0</i><i>.</i><i>0</i><i>0</i></div>
<div class="t" style="left:246px;top:108px;"><i style="width:8.4px">本</i><i style="width:8.4px">次</i><i style="width:8.4px">金</i><i style="width:8.4px">额</i><i style="width:8.4px">合</i><i style="width:8.4px">计</i><i style="width:4.2px">:</i></div>
<div class="a" style="left:305px;top:107px;width:41px;height:15px;background:#fdf0b8;border:1px solid #d4ccd4"></div>
<div class="n" style="left:223.5px;top:110px;width:120px;text-align:right;color:#aaa690;"><i>1</i><i>0</i><i>2</i><i>.</i><i>1</i><i>2</i></div>
<div class="t" style="left:350px;top:108px;"><i style="width:8.4px">本</i><i style="width:8.4px">次</i><i style="width:8.4px">应</i><i style="width:8.4px">收</i><i style="width:8.4px">金</i><i style="width:8.4px">额</i><i style="width:4.2px">:</i></div>
<div class="a" style="left:412px;top:107px;width:51px;height:15px;background:#fdf0b8;border:1px solid #d4ccd4"></div>
<div class="n" style="left:340.5px;top:110px;width:120px;text-align:right;color:#9c9276;-webkit-text-stroke:0.45px #9c9276"><i>1</i><i>0</i><i>3</i><i>.</i><i>0</i><i>0</i></div>
<div class="t" style="left:157px;top:135px;"><i style="width:8.4px">本</i><i style="width:8.4px">次</i><i style="width:8.4px">结</i><i style="width:8.4px">余</i><i style="width:4.2px">:</i></div>
<div class="a" style="left:201px;top:134px;width:41px;height:14px;background:#fdf0b8;border:1px solid #d4ccd4"></div>
<div class="n" style="left:119.5px;top:137px;width:120px;text-align:right;color:#aaa690;"><i>0</i><i>.</i><i>8</i><i>8</i></div>
<div class="t" style="left:351px;top:135px;"><i style="width:8.4px">预</i><i style="width:8.4px">付</i><i style="width:8.4px">款</i><i style="width:8.4px">余</i><i style="width:8.4px">额</i><i style="width:4.2px">:</i></div>
<div class="a" style="left:412px;top:134px;width:51px;height:14px;background:#fdf0b8;border:1px solid #d4ccd4"></div>
<div class="n" style="left:340.5px;top:137px;width:120px;text-align:right;color:#aaa690;"><i>0</i><i>.</i><i>0</i><i>0</i></div>
<div class="t b" style="left:158.5px;top:156px;color:#481494;font-weight:bold;font-size:12.4px;line-height:14px"><i style="width:12.43px">人</i><i style="width:12.43px">民</i><i style="width:12.43px">币</i><i style="width:12.43px">（</i><i style="width:12.43px">大</i><i style="width:12.43px">写</i><i style="width:12.43px">）</i></div>
<div class="t b" style="left:242.5px;top:156px;color:#481494;font-weight:bold;font-size:12.4px;line-height:14px"><i style="width:5.5px">:</i><i style="width:12.43px">壹</i><i style="width:12.43px">佰</i><i style="width:12.43px">零</i><i style="width:12.43px">叁</i><i style="width:12.43px">元</i><i style="width:12.43px">整</i></div>
<div class="t b" style="left:333.5px;top:156px;color:#481494;font-weight:bold;font-size:12.4px;line-height:14px"><i style="width:12.43px">￥</i></div>
<div class="t b" style="left:344.9px;top:156px;color:#481494;font-weight:bold;font-size:12.4px;line-height:14px;font-family:'Liberation Mono'"><i style="width:6.2px">:</i><i style="width:6.2px">1</i><i style="width:6.2px">0</i><i style="width:6.2px">3</i><i style="width:6.2px">.</i><i style="width:6.2px">0</i><i style="width:6.2px">0</i></div>
<div class="t" style="left:484px;top:108.5px;"><i style="width:8.4px">预</i><i style="width:8.4px">收</i><i style="width:8.4px">金</i><i style="width:8.4px">额</i><i style="width:4.2px">:</i></div>
<div class="a" style="left:528px;top:107px;width:58px;height:15px;background:#fffee0;border:1px solid #c4c0cc;border-top-color:#a8a4b8;border-left-color:#a8a4b8"></div>
<div class="a" style="left:530px;top:110px;width:1px;height:9px;background:#000"></div>
<div class="t" style="left:593px;top:108.5px;"><i style="width:8.4px">收</i><i style="width:8.4px">款</i><i style="width:8.4px">方</i><i style="width:8.4px">式</i><i style="width:4.2px">:</i></div>
<div class="a" style="left:637px;top:107px;width:64px;height:15px;background:#fffee0;border:1px solid #c4c0cc;border-top-color:#a8a4b8;border-left-color:#a8a4b8"></div>
<div class="a" style="left:691px;top:108px;width:9px;height:13px;background:linear-gradient(#f4f0ec,#dcd8d4);border-left:1px solid #c8c4c8"></div>
<svg class="a" style="left:693px;top:113px" width="5" height="3" viewBox="0 0 5 3"><path d="M0 0 L5 0 L2.5 3Z" fill="#222"/></svg>
<div class="t" style="left:643px;top:108.5px;color:#222"><i style="width:8.4px">现</i><i style="width:8.4px">金</i></div>
<div class="t" style="left:484px;top:134.5px;"><i style="width:8.4px">零</i><i style="width:8.4px">钱</i><i style="width:8.4px">找</i><i style="width:8.4px">补</i><i style="width:4.2px">:</i></div>
<div class="a" style="left:528px;top:133px;width:58px;height:16px;background:#fdf0b8;border:1px solid #d4ccd4"></div>
<div class="t" style="left:153px;top:185px;color:#3c3090"><i style="width:8.4px">欠</i><i style="width:8.4px">费</i><i style="width:8.4px">明</i><i style="width:8.4px">细</i><i style="width:8.4px">如</i><i style="width:8.4px">下</i><i style="width:4.2px">:</i></div>
<div class="a" style="left:880px;top:542px;width:124px;height:36px;background:#fffde0"></div>
<svg class="a" style="left:879px;top:541px" width="38" height="38" viewBox="0 0 38 38"><path d="M7.5 3.8 L12.5 4.5 L12 16 L16.5 22 L14.5 23.5 L9.5 17Z" fill="#c4e4f4"/><path d="M13.5 9 L26 11.5 L34.5 13 L31.5 18 L26 14.5 L15 11Z" fill="#c4e4f4"/><path d="M10 27.5 L26 18.5 L26.5 21 L15.5 29 L15 31Z" fill="#c4e4f4"/><path d="M12 12 Q18 9 24 14 L20 15 Q16 13 13 15Z" fill="#e0f0f4"/><path d="M2.9 6.2 L9.8 6.2 L10.7 16.9 L15.3 22.4 L3.3 16.3Z" fill="#0f52b4"/><path d="M15 8.5 L24.7 3.6 L33.8 8.8 L31.2 13.7 L24.7 10.4Z" fill="#0f52b4"/><path d="M15.3 28 L26.7 20.8 L26.7 28.6 L17.6 34.5 L16.6 30.6Z" fill="#0f52b4"/></svg>
<div class="t b" style="left:918.5px;top:542.5px;color:#44a0dc;font-weight:bold;font-size:21px;line-height:24px;-webkit-text-stroke:0.5px #44a0dc"><i style="width:21px">宜</i><i style="width:21px">天</i></div>
<div class="t b" style="left:960.5px;top:542.5px;color:#48b020;font-weight:bold;font-size:21px;line-height:24px;-webkit-text-stroke:0.5px #48b020"><i style="width:21px">信</i><i style="width:21px">达</i></div>
<div class="a" style="left:922px;top:567px;white-space:nowrap;color:#111;font-size:9.6px;letter-spacing:0.75px;line-height:11px;-webkit-text-stroke:0.35px #111">Yitianxinda.com</div>
</body></html>
